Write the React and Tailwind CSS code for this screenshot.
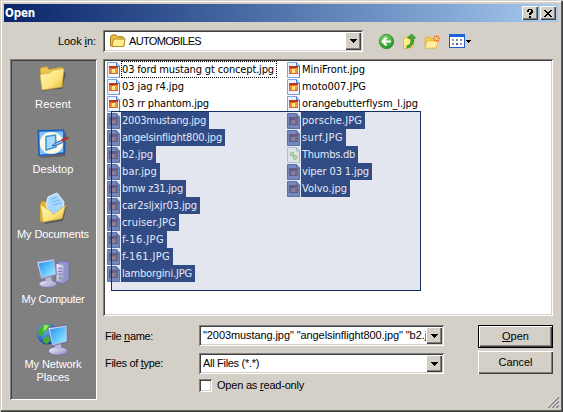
import { useLayoutEffect, useRef } from "react";

const UI = "font-['Liberation_Sans',Arial,sans-serif] text-[11px]";
const TAHOMA = "font-['DejaVu_Sans_Condensed','DejaVu_Sans',sans-serif] text-[11px]";
const SUNKEN =
  "shadow-[inset_1px_1px_0_#808080,inset_-1px_-1px_0_#ffffff,inset_2px_2px_0_#404040,inset_-2px_-2px_0_#d4d0c8]";
const RAISED =
  "shadow-[inset_1px_1px_0_#ffffff,inset_-1px_-1px_0_#404040,inset_-2px_-2px_0_#808080]";

// Single line of text whose tracking is adjusted so that it is `w` pixels wide.
function Fit({ w, children, className = "" }) {
  const ref = useRef(null);
  useLayoutEffect(() => {
    const el = ref.current;
    el.style.letterSpacing = "0px";
    const natural = el.getBoundingClientRect().width;
    el.style.letterSpacing = `${(w - natural) / el.textContent.length}px`;
  }, [w]);
  return (
    <span ref={ref} className={`inline-block whitespace-pre ${className}`}>
      {children}
    </span>
  );
}

function Arrow() {
  return (
    <div className={`flex h-full w-4 shrink-0 items-center justify-center bg-[#d4d0c8] ${RAISED}`}>
      <svg width="7" height="4" shapeRendering="crispEdges">
        <path d="M0 0h7v1h-1v1h-1v1h-1v1h-1v-1h-1v-1h-1v-1h-1z" />
      </svg>
    </div>
  );
}

function Combo({ className, children }) {
  return (
    <div className={`flex items-center bg-white p-[2px] ${SUNKEN} ${className}`}>
      <div className="flex min-w-0 flex-1 items-center overflow-hidden">{children}</div>
      <Arrow />
    </div>
  );
}

function OpenFolder() {
  return (
    <svg width="17" height="14" viewBox="0 0 17 14">
      <path d="M1.5 12V2.500L3 1h4l1.500 1.700h5.200L15 4v8z" fill="#e9bd3c" stroke="#a77d16" />
      <path d="M3 12.500 4.500 5h11.700l-1.600 7.500z" fill="#ffee94" stroke="#b98e20" />
    </svg>
  );
}

function Gradients() {
  return (
    <svg className="absolute" width="0" height="0">
      <defs>
        <linearGradient id="yellow" x1="0" y1="0" x2="1" y2="1">
          <stop offset="0" stopColor="#fff8b8" />
          <stop offset=".6" stopColor="#fbe37b" />
          <stop offset="1" stopColor="#deb030" />
        </linearGradient>
        <linearGradient id="screen" x1="0" y1="0" x2="1" y2="1">
          <stop offset="0" stopColor="#2b8de8" />
          <stop offset=".5" stopColor="#5cc3fb" />
          <stop offset="1" stopColor="#b4eeff" />
        </linearGradient>
        <linearGradient id="metal" x1="0" y1="0" x2="1" y2="1">
          <stop offset="0" stopColor="#f5f4ff" />
          <stop offset="1" stopColor="#8d8cc0" />
        </linearGradient>
        <radialGradient id="globe" cx=".35" cy=".3" r=".75">
          <stop offset="0" stopColor="#7ab8ff" />
          <stop offset="1" stopColor="#093a9c" />
        </radialGradient>
        <radialGradient id="green" cx=".4" cy=".3" r=".7">
          <stop offset="0" stopColor="#8fdc72" />
          <stop offset="1" stopColor="#1d9422" />
        </radialGradient>
      </defs>
    </svg>
  );
}

function RecentIcon() {
  return (
    <svg width="32" height="32">
      <path d="m5 28 20-1 4-16-2-1-3 15-18 4z" fill="#4d4a3a" opacity=".7" />
      <path d="M3 8 4 5.500l6-1 2 3L25 5l1 2.500-1 15-17 4-2-2z" fill="#eac552" stroke="#b9912b" strokeWidth=".6" />
      <path d="m3 12.500 10-1.500 2-2.500 12-2-2 18.500L5 28z" fill="url(#yellow)" stroke="#c79e2e" strokeWidth=".6" />
    </svg>
  );
}

function DesktopIcon() {
  return (
    <svg width="32" height="32">
      <path d="m3 30 24-3 1-22 1 1-1 23-24 2z" fill="#444" opacity=".6" />
      <path d="M1 3.500 27 3l.5 23L2 29z" fill="#2b7cdc" stroke="#1557b0" />
      <path d="M2.500 5 26 4.500v20.500L3 27.500z" fill="#84c2ff" />
      <ellipse cx="14.500" cy="16" rx="11.700" ry="11" fill="#fffbe0" />
      <path d="m9 9.500 9.500-1.500.5 12-10 3z" fill="#a9d9ff" stroke="#3a91de" strokeWidth="1.500" />
      <path d="m15 19 3-3 7-3 2 2-7 3z" fill="#8fbdf0" stroke="#1e4c8e" strokeWidth=".8" />
      <path d="m26 13 4-2" stroke="#b5332a" strokeWidth="3" strokeLinecap="round" />
    </svg>
  );
}

function DocumentsIcon() {
  return (
    <svg width="32" height="32">
      <path d="M7 30.500 25 27l4-13v3l-3 12-18 3z" fill="#444" opacity=".6" />
      <path d="m3 12 2-3 5 1 3 3 8-2 3 5-2 11-17 3-2-1z" fill="#dfb33a" stroke="#b48c25" strokeWidth=".6" />
      <path d="m11 5 9-4 7 9-2 13-9 3-7-13z" fill="#a7d6ff" stroke="#e8f5ff" />
      <path d="m14 7 6-2M15 10l8-2M16 13l8-2" stroke="#7bbaf0" strokeWidth="1.200" />
      <path d="M3.500 12.500 14 19.500l2.500 3L28.500 13l-3.500 13.500L6 30z" fill="url(#yellow)" stroke="#cfa32f" strokeWidth=".6" />
    </svg>
  );
}

function ComputerIcon() {
  return (
    <svg width="34" height="32">
      <path d="m20 7 5-3 8 1v18l-6 4-7-2z" fill="#9593c8" stroke="#6261a0" strokeWidth=".6" />
      <path d="m20.500 7 7 1v18l-7-2z" fill="url(#metal)" />
      <path d="m22 11 4 .5m-4 2.500 4 .5m-4 2.500 4 .5" stroke="#7775ad" />
      <circle cx="24" cy="21" r="1" fill="#4a9c38" />
      <ellipse cx="12" cy="27" rx="9" ry="3.500" fill="url(#metal)" stroke="#6967a2" strokeWidth=".6" />
      <path d="m9 20 6-1 1 6-5 2z" fill="#bab9de" />
      <path d="m1 5 17-3 3 16L5 22z" fill="url(#metal)" stroke="#7c7ab3" strokeWidth=".6" />
      <path d="m2.500 6.200 14.500-2.500 2.500 13.200L6 20z" fill="url(#screen)" />
    </svg>
  );
}

function NetworkIcon() {
  return (
    <svg width="34" height="34">
      <circle cx="11.500" cy="12" r="10.500" fill="url(#globe)" />
      <path d="m4 6 5-4 6 1-2 5-5 2-1 4-4-1-1-3zm3 9 6 0 2 3-4 4-4-2z" fill="#42b02c" />
      <path d="m8 3 5 0-3 5-3 1z" fill="#94e268" />
      <ellipse cx="22" cy="29" rx="9.500" ry="4" fill="url(#metal)" stroke="#6967a2" strokeWidth=".6" />
      <path d="m18 20 7 0 0 7-6 0z" fill="#bab9de" />
      <path d="m12 6 19-3 1 17-16 4z" fill="url(#metal)" stroke="#55549a" strokeWidth=".6" />
      <path d="m13.800 7.200 15.700-2.500 1 14.300L17 22.300z" fill="url(#screen)" />
    </svg>
  );
}

function FileIcon({ selected, db }) {
  return (
    <svg width="13" height="16" viewBox="0 0 13 16">
      <path
        d="M.5.500h9L12.500 4v11.500H.5z"
        fill={selected ? (db ? "#dce4e6" : "#7488bd") : "#eef4ff"}
        stroke={selected ? (db ? "#b4c0d0" : "#5973aa") : "#7fa3dc"}
      />
      <path d="M9.500.500V4h3v11.500" fill="none" stroke={selected ? (db ? "#aab6c6" : "#5973aa") : "#4a7ac4"} />
      {db ? (
        <g fill="#b5d2ac" stroke="#8db287" strokeWidth=".7">
          <circle cx="5" cy="7" r="2" />
          <circle cx="8" cy="10.500" r="2" />
        </g>
      ) : (
        <g>
          <path d="M2 4h9v8H2z" fill={selected ? "#5a5d8d" : "#e2662c"} />
          <path d="M2 4h9v2H2z" fill={selected ? "#6b5a80" : "#b93a1a"} />
          <path d="M5 7h3v4H5z" fill={selected ? "#8f7f90" : "#ffe682"} />
          <path d="M8 6h2.500v5H8z" fill={selected ? "#6f6c93" : "#f29b3b"} />
          <path d="M3 7h2v4H3z" fill={selected ? "#6f6c93" : "#ee8c3c"} />
        </g>
      )}
    </svg>
  );
}

const LEFT = [
  ["03 ford mustang gt concept.jpg", 156, "focus"],
  ["03 jag r4.jpg", 66],
  ["03 rr phantom.jpg", 91],
  ["2003mustang.jpg", 88, "sel"],
  ["angelsinflight800.jpg", 104, "sel"],
  ["b2.jpg", 35, "sel"],
  ["bar.jpg", 39, "sel"],
  ["bmw z31.jpg", 65, "sel"],
  ["car2sljxjr03.jpg", 79, "sel"],
  ["cruiser.JPG", 58, "sel"],
  ["f-16.JPG", 46, "sel"],
  ["f-161.JPG", 52, "sel"],
  ["lamborgini.JPG", 74, "sel"],
];
const RIGHT = [
  ["MiniFront.jpg", 67],
  ["moto007.JPG", 68],
  ["orangebutterflysm_l.jpg", 120],
  ["porsche.JPG", 64, "sel"],
  ["surf.JPG", 45, "sel"],
  ["Thumbs.db", 57, "sel"],
  ["viper 03 1.jpg", 71, "sel"],
  ["Volvo.jpg", 49, "sel"],
];

function FileColumn({ files }) {
  return (
    <div className={`flex w-[180px] flex-col ${TAHOMA}`}>
      {files.map(([name, width, state]) => (
        <div key={name} className="flex h-[17px] items-center gap-[1px]">
          <FileIcon selected={state === "sel"} db={name === "Thumbs.db"} />
          <div
            className={`flex h-[17px] items-center border pr-[2px] leading-[15px] ${
              state === "sel"
                ? "border-[#314b84] bg-[#314b84] text-[#e2eafa]"
                : state === "focus"
                  ? "border-dotted border-black text-black"
                  : "border-transparent text-black"
            }`}
          >
            <Fit w={width - 4}>{name}</Fit>
          </div>
        </div>
      ))}
    </div>
  );
}

function Place({ icon, label, width }) {
  return (
    <div className="flex h-[65px] flex-col items-center pr-px">
      <div className="flex h-[36px] items-start">{icon}</div>
      {label.map((line, i) => (
        <Fit key={line} w={width[i]} className="leading-[13px] text-white">
          {line}
        </Fit>
      ))}
    </div>
  );
}

export default function App() {
  return (
    <div className={`flex h-[412px] w-[563px] flex-col overflow-hidden bg-[#d4d0c8] pt-1 pr-[5px] pl-1 text-black shadow-[inset_0_1px_0_#d4d0c8,inset_1px_0_0_#d4d0c8,inset_-1px_-1px_0_#404040,inset_-2px_-2px_0_#606060,inset_2px_2px_0_#ffffff] ${UI}`}>
      <Gradients />
      <div className="flex h-[18px] shrink-0 items-center bg-linear-to-r from-[#0a246a] to-[#a6caf0] pr-[2px] pl-px">
        <Fit w={30} className="flex-none pt-px font-['DejaVu_Sans_Condensed','DejaVu_Sans',sans-serif] text-[11.5px] font-bold text-white">
          Open
        </Fit>
        <div className="ml-auto flex gap-[2px]">
          <div className={`flex h-[14px] w-4 items-center justify-center bg-[#d4d0c8] ${RAISED}`}>
            <svg width="6" height="9" shapeRendering="crispEdges">
              <path d="M1 0h4v1h1v3h-1v1h-1v1h-2v-2h1v-1h1v-2h-2v2h-2v-2h1zM2 7h2v2h-2z" />
            </svg>
          </div>
          <div className={`flex h-[14px] w-4 items-center justify-center bg-[#d4d0c8] ${RAISED}`}>
            <svg width="8" height="7" shapeRendering="crispEdges">
              <path d="M0 0h2v1h1v1h2v-1h1v-1h2v1h-1v1h-1v1h-1v1h1v1h1v1h1v1h-2v-1h-1v-1h-2v1h-1v1h-2v-1h1v-1h1v-1h1v-1h-1v-1h-1v-1h-1z" />
            </svg>
          </div>
        </div>
      </div>

      <div className="mt-2 flex h-[22px] shrink-0 items-center">
        <div className="w-[99px] pl-[54px]">
          <Fit w={38}>
            Look <u className="underline-offset-1">i</u>n:
          </Fit>
        </div>
        <Combo className="h-[22px] w-[260px]">
          <div className="flex items-center gap-[3px] pl-1">
            <OpenFolder />
            <Fit w={72}>AUTOMOBILES</Fit>
          </div>
        </Combo>
        <div className="ml-[15px] flex items-center">
          <svg width="17" height="17">
            <circle cx="8.500" cy="8.500" r="7.200" fill="url(#green)" stroke="#33852d" strokeWidth=".8" />
            <path d="M13 8.500H5M8.500 4.500l-4 4 4 4" fill="none" stroke="#fff" strokeWidth="1.900" />
          </svg>
          <svg className="ml-[7px]" width="16" height="17">
            <path d="M1 6 3 4l3 0 1 2 5-1-1 9-9 2z" fill="#ffeb83" stroke="#d5a930" strokeWidth=".8" />
            <path d="M5 13c4-1 4.500-5 3.500-8H5.500l4-4 4 4-2 0c.5 5-1.500 9-6.500 10z" fill="#42b336" stroke="#23781e" strokeWidth=".8" />
          </svg>
          <svg className="ml-[6px]" width="18" height="17">
            <path d="M1 5 2 4h4l1 2 6 0-1 9H1z" fill="#f4ca4f" stroke="#dca936" strokeWidth=".7" />
            <path d="m1 15 2-7h11l-2 7z" fill="#fff0a0" stroke="#e4b74b" strokeWidth=".7" />
            <path d="m12.500 2 0 7M9 5.500h7M10 3l5 5M15 3l-5 5" stroke="#f3742c" strokeWidth="1.100" />
            <circle cx="12.500" cy="5.500" r="1.500" fill="#ffe16b" />
          </svg>
          <svg className="ml-[7px]" width="16" height="16">
            <rect x=".5" y="1.500" width="15" height="13" fill="#fff" stroke="#1d5ec2" />
            <path d="M0 1h16v3H0z" fill="#1764d8" />
            <path d="M3 6h2v2H3zm8 4h2v2h-2z" fill="#7ea1cf" />
            <path d="M7 6h2v2H7z" fill="#57a75c" />
            <path d="M11 6h2v2h-2z" fill="#8d82c5" />
            <path d="M3 10h2v2H3z" fill="#c47b76" />
            <path d="M7 10h2v2H7z" fill="#315ba5" />
          </svg>
          <svg className="ml-px" width="5" height="3" shapeRendering="crispEdges">
            <path d="M0 0h5v1h-1v1h-1v1h-1v-1h-1v-1h-1z" />
          </svg>
        </div>
      </div>

      <div className="mt-[7px] flex pl-[6px]">
        <div className="flex h-[341px] w-[87px] shrink-0 flex-col bg-[#808080] pt-[3px] shadow-[inset_1px_1px_0_#808080,inset_-1px_-1px_0_#ffffff,inset_2px_2px_0_#404040]">
          <Place icon={<RecentIcon />} label={["Recent"]} width={[36]} />
          <Place icon={<DesktopIcon />} label={["Desktop"]} width={[41]} />
          <Place icon={<DocumentsIcon />} label={["My Documents"]} width={[72]} />
          <Place icon={<ComputerIcon />} label={["My Computer"]} width={[63]} />
          <Place icon={<NetworkIcon />} label={["My Network", "Places"]} width={[57, 33]} />
        </div>

        <div className="ml-[6px] flex w-[450px] shrink-0 flex-col">
          <div className={`relative h-[257px] bg-white pt-[2px] pl-1 ${SUNKEN}`}>
            <div className="absolute top-[52px] left-2 h-[180px] w-[310px] bg-[#e3e6ef]" />
            <div className="relative flex">
              <FileColumn files={LEFT} />
              <FileColumn files={RIGHT} />
            </div>
            <div className="absolute top-[52px] left-2 h-[180px] w-[310px] border border-[#142e66]" />
          </div>

          <div className="mt-[9px] flex">
            <div className="w-[341px]">
              <div className="flex h-[21px] items-center">
                <div className="w-24 pt-px pl-[2px]">
                  <Fit w={48}>
                    File <u className="underline-offset-1">n</u>ame:
                  </Fit>
                </div>
                <Combo className="h-[21px] w-[245px]">
                  <Fit w={226} className="pl-[2px]">{'"2003mustang.jpg" "angelsinflight800.jpg" "b2.j'}</Fit>
                </Combo>
              </div>
              <div className="mt-[7px] flex h-[21px] items-center">
                <div className="w-24 pl-[2px]">
                  <Fit w={58}>
                    Files of <u className="underline-offset-1">t</u>ype:
                  </Fit>
                </div>
                <Combo className="h-[21px] w-[245px]">
                  <Fit w={58} className="pl-[2px]">All Files (*.*)</Fit>
                </Combo>
              </div>
              <div className="mt-[5px] flex items-center pl-24">
                <div className={`h-[13px] w-[13px] bg-white ${SUNKEN}`} />
                <Fit w={87} className="ml-[5px] leading-[13px]">
                  Open as <u className="underline-offset-1">r</u>ead-only
                </Fit>
              </div>
            </div>
            <div className="ml-[34px] flex flex-col gap-[3px]">
              <div className="h-[23px] w-[75px] bg-black p-px">
                <div className={`flex h-full items-center justify-center bg-[#d4d0c8] pb-px ${RAISED}`}>
                  <Fit w={27}>
                    <u className="underline-offset-1">O</u>pen
                  </Fit>
                </div>
              </div>
              <div className={`flex h-[23px] w-[75px] items-center justify-center pb-px ${RAISED}`}>
                <Fit w={34}>Cancel</Fit>
              </div>
            </div>
          </div>
          <svg className="mt-1 ml-[444px] shrink-0" width="12" height="12">
            <path d="M1 12 12 1M5 12l7-7M9 12l3-3" stroke="#808080" strokeWidth="1.600" />
            <path d="M0 11.500 11.500 0M4 11.500l8-8M8 11.500l4-4" stroke="#fff" strokeWidth=".8" />
          </svg>
        </div>
      </div>
    </div>
  );
}
